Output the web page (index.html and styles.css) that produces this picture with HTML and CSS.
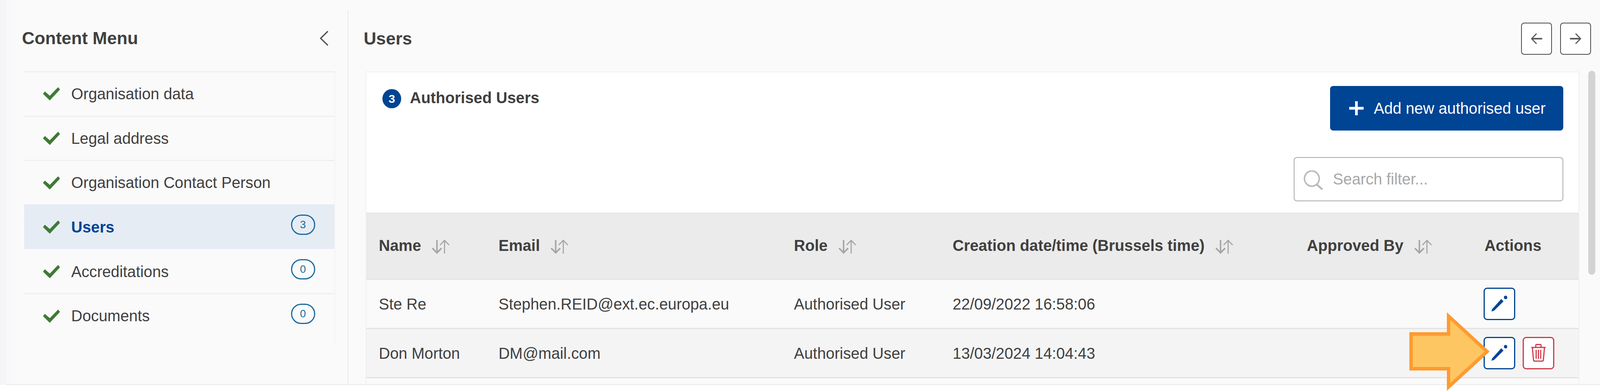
FILE: index.html
```html
<!DOCTYPE html>
<html lang="en">
<head>
<meta charset="utf-8">
<title>Users</title>
<link rel="stylesheet" href="styles.css">
</head>
<body>
<svg class="defs" width="0" height="0" aria-hidden="true">
  <symbol id="check" viewBox="0 0 46 34" preserveAspectRatio="none"><polygon points="0,17 5,11 18,22 40,0 45,6 18,34" fill="currentColor"/></symbol>
  <symbol id="sort" viewBox="0 0 46 37" preserveAspectRatio="none"><path d="M13 1V34M1 22L13 34L25 22" fill="none" stroke="#a6a6a6" stroke-width="4"/><path d="M33 36V2M21 14L33 2L45 14" fill="none" stroke="#a6a6a6" stroke-width="3"/></symbol>
  <symbol id="pencil" viewBox="0 0 44 42" preserveAspectRatio="none"><polygon points="1,41 3,35 27,9 33,15 8,39" fill="currentColor"/><circle cx="38.500" cy="5" r="4.500" fill="currentColor"/></symbol>
  <symbol id="trash" viewBox="0 0 40 46" preserveAspectRatio="none"><path d="M1 9H39M13 8V4Q13 1.500 15.500 1.500H24.500Q27 1.500 27 4V8M4 9L7 41Q7.300 44 10 44H30Q32.700 44 33 41L36 9M14 15V38M20 15V38M26 15V38" fill="none" stroke="currentColor" stroke-width="3"/></symbol>
</svg>
<div class="app">
  <div class="shell">
    <aside class="sidebar">
      <div class="side-head">
        <h2 class="page-title">Content Menu</h2>
        <svg class="chevron" viewBox="0 0 24 40" preserveAspectRatio="none"><path d="M22 2L3 20L22 38" fill="none" stroke="#555" stroke-width="3.500"/></svg>
      </div>
      <ul class="menu">
        <li class="menu-item"><svg class="check"><use href="#check"/></svg><span class="menu-label">Organisation data</span></li>
        <li class="menu-item"><svg class="check"><use href="#check"/></svg><span class="menu-label">Legal address</span></li>
        <li class="menu-item"><svg class="check"><use href="#check"/></svg><span class="menu-label">Organisation Contact Person</span></li>
        <li class="menu-item active"><svg class="check"><use href="#check"/></svg><span class="menu-label">Users</span><span class="badge">3</span></li>
        <li class="menu-item after-active"><svg class="check"><use href="#check"/></svg><span class="menu-label">Accreditations</span><span class="badge">0</span></li>
        <li class="menu-item"><svg class="check"><use href="#check"/></svg><span class="menu-label">Documents</span><span class="badge">0</span></li>
      </ul>
    </aside>
    <main class="main">
      <header class="main-head">
        <h2 class="page-title">Users</h2>
        <div class="nav-buttons">
          <button class="nav-btn" type="button"><svg viewBox="0 0 30 28" preserveAspectRatio="none"><path d="M30 14H3" fill="none" stroke="#5a5a5a" stroke-width="4"/><path d="M15 1L2 14L15 27" fill="none" stroke="#5a5a5a" stroke-width="3"/></svg></button>
          <button class="nav-btn" type="button"><svg viewBox="0 0 30 28" preserveAspectRatio="none"><path d="M0 14H27" fill="none" stroke="#5a5a5a" stroke-width="4"/><path d="M15 1L28 14L15 27" fill="none" stroke="#5a5a5a" stroke-width="3"/></svg></button>
        </div>
      </header>
      <div class="content">
        <section class="card">
          <div class="card-top">
            <div class="card-title"><span class="count">3</span><h3 class="card-heading">Authorised Users</h3></div>
            <div class="card-tools">
              <button class="add-btn" type="button"><svg class="plus" viewBox="0 0 38 36" preserveAspectRatio="none"><path d="M19 0V36M0 18H38" fill="none" stroke="#fff" stroke-width="7"/></svg>Add new authorised user</button>
              <div class="search">
                <svg class="search-icon" viewBox="0 0 52 50" preserveAspectRatio="none"><circle cx="22" cy="21" r="19.500" fill="none" stroke="#bbb" stroke-width="4"/><path d="M35 36L50 49" fill="none" stroke="#bbb" stroke-width="5"/></svg>
                <span class="search-text">Search filter...</span>
              </div>
            </div>
          </div>
          <table class="users">
            <colgroup><col class="c1"><col class="c2"><col class="c3"><col class="c4"><col class="c5"><col class="c6"></colgroup>
            <thead>
              <tr>
                <th>Name<svg class="sort"><use href="#sort"/></svg></th>
                <th>Email<svg class="sort"><use href="#sort"/></svg></th>
                <th>Role<svg class="sort"><use href="#sort"/></svg></th>
                <th>Creation date/time (Brussels time)<svg class="sort"><use href="#sort"/></svg></th>
                <th>Approved By<svg class="sort"><use href="#sort"/></svg></th>
                <th>Actions</th>
              </tr>
            </thead>
            <tbody>
              <tr>
                <td>Ste Re</td><td>Stephen.REID@ext.ec.europa.eu</td><td>Authorised User</td><td>22/09/2022 16:58:06</td><td></td>
                <td class="actions"><button class="icon-btn edit" type="button"><svg class="pencil"><use href="#pencil"/></svg></button></td>
              </tr>
              <tr class="alt">
                <td>Don Morton</td><td>DM@mail.com</td><td>Authorised User</td><td>13/03/2024 14:04:43</td><td></td>
                <td class="actions"><button class="icon-btn edit" type="button"><svg class="pencil"><use href="#pencil"/></svg></button><button class="icon-btn del" type="button"><svg class="trash"><use href="#trash"/></svg></button></td>
              </tr>
              <tr><td>&nbsp;</td><td></td><td></td><td></td><td></td><td></td></tr>
            </tbody>
          </table>
        </section>
        <div class="scroll-thumb"></div>
      </div>
    </main>
  </div>
</div>
<svg class="callout" viewBox="0 0 212 205" preserveAspectRatio="none"><polygon points="4.500,57.500 103.500,57.500 103.500,12 205,102.500 103.500,193 103.500,146.500 4.500,146.500" fill="#fdc663" stroke="#fd9b30" stroke-width="9" stroke-miterlimit="10"/></svg>
</body>
</html>
```
FILE: styles.css
```css
:root { --u: calc(100vw / 4224); }
* { box-sizing: border-box; }
html, body { margin: 0; padding: 0; }
body {
  position: relative;
  width: 100%;
  height: 1003px;
  overflow: hidden;
  background: #fff;
  color: #404040;
  font-family: "Liberation Sans", Arial, sans-serif;
  font-size: calc(var(--u) * 41);
}
.defs { position: absolute; }
.app { height: 985px; padding-left: calc(var(--u) * 16); background: #f5f5f5; }
.shell {
  display: flex;
  height: 100%;
  border-bottom: 2px solid #e8e8ea;
  background: linear-gradient(to right, #f7f8fa, #fafafa 32px);
}
.sidebar {
  width: calc(var(--u) * 904);
  margin-top: 27px;
  padding: 0 calc(var(--u) * 33) 0 calc(var(--u) * 48);
  border-right: 2px solid #e8e8e8;
  flex: none;
}
.side-head {
  display: flex;
  align-items: center;
  justify-content: space-between;
  height: 155px;
  padding: 0 calc(var(--u) * 17) 13px 0;
  margin-left: calc(var(--u) * -6);
}
.page-title { margin: 0; font-size: calc(var(--u) * 46); font-weight: 700; color: #404040; }
.chevron { width: calc(var(--u) * 24); height: 40px; }
.menu {
  list-style: none;
  margin: 0;
  padding: 0;
  height: 700px;
  border-right: 2px solid #f3f3f3;
}
.menu-item {
  display: flex;
  align-items: center;
  height: 113.7px;
  padding: 0 calc(var(--u) * 51) 0 calc(var(--u) * 49);
  border-top: 3px solid #efefef;
}
.check { width: calc(var(--u) * 46); height: 34px; margin-right: calc(var(--u) * 29); color: #3f7a35; flex: none; }
.menu-label { flex: 1; }
.menu-item.active { background: #e6ecf4; border-top-color: #e6ecf4; }
.menu-item.active .menu-label { color: #004494; font-weight: 700; }
.menu-item.after-active { border-top-color: transparent; }
.badge {
  display: flex;
  align-items: center;
  justify-content: center;
  width: calc(var(--u) * 64);
  height: 52px;
  margin-bottom: 12px;
  border: 3px solid #1b6b9f;
  border-radius: 26px;
  color: #1b6b9f;
  font-size: calc(var(--u) * 28);
}
.main { flex: 1; min-width: 0; display: flex; flex-direction: column; overflow: hidden; padding-left: calc(var(--u) * 40); }
.main-head {
  display: flex;
  align-items: center;
  justify-content: space-between;
  height: 181px;
  padding: 16px calc(var(--u) * 24) 0 0;
  flex: none;
}
.nav-buttons { display: flex; gap: calc(var(--u) * 22); }
.nav-btn {
  display: flex;
  align-items: center;
  justify-content: center;
  width: calc(var(--u) * 81);
  height: 82px;
  padding: 0;
  border: 2.5px solid #4a4a4a;
  border-radius: 8px;
  background: #fff;
}
.nav-btn svg { width: calc(var(--u) * 30); height: 28px; }
.content { flex: 1; min-height: 0; display: flex; padding-left: calc(var(--u) * 5); }
.card {
  width: calc(var(--u) * 3204);
  height: 900px;
  margin-top: 2px;
  background: #fff;
  border: 2px solid #efefef;
  flex: none;
}
.card-top {
  display: flex;
  justify-content: space-between;
  height: 362px;
  padding: 35px calc(var(--u) * 40) 0 calc(var(--u) * 43);
  border-bottom: 3px solid #e6e6e6;
}
.card-title { display: flex; align-items: flex-start; gap: calc(var(--u) * 23); margin-top: 8px; }
.count {
  display: flex;
  align-items: center;
  justify-content: center;
  width: calc(var(--u) * 49);
  height: 49px;
  border-radius: 50%;
  background: #004494;
  color: #fff;
  font-weight: 700;
  font-size: calc(var(--u) * 31);
}
.card-heading { margin: 0; font-size: calc(var(--u) * 41); font-weight: 700; color: #404040; }
.card-tools { display: flex; flex-direction: column; align-items: flex-end; gap: 68px; }
.add-btn {
  display: flex;
  align-items: center;
  width: calc(var(--u) * 616);
  height: 114px;
  padding: 0 0 0 calc(var(--u) * 51);
  border: 0;
  border-radius: 8px;
  background: #004494;
  color: #fff;
  font-family: "Liberation Sans", Arial, sans-serif;
  font-size: calc(var(--u) * 41);
}
.plus { width: calc(var(--u) * 38); height: 36px; margin-right: calc(var(--u) * 27); flex: none; }
.search {
  display: flex;
  align-items: center;
  width: calc(var(--u) * 711);
  height: 113px;
  padding-left: calc(var(--u) * 23);
  border: 2.5px solid #aaa;
  border-radius: 8px;
}
.search-icon { width: calc(var(--u) * 52); height: 50px; margin: 4px calc(var(--u) * 26) 0 0; flex: none; }
.search-text { color: #a8a8a8; }
.users { width: calc(var(--u) * 3200); border-collapse: collapse; table-layout: fixed; }
.c1 { width: calc(var(--u) * 349); }
.c2 { width: calc(var(--u) * 780); }
.c3 { width: calc(var(--u) * 419); }
.c4 { width: calc(var(--u) * 935); }
.c5 { width: calc(var(--u) * 469); }
.c6 { width: calc(var(--u) * 248); }
.users th, .users td { padding: 0; text-align: left; border-bottom: 3px solid #e3e3e3; white-space: nowrap; }
.users th:first-child, .users td:first-child { padding-left: calc(var(--u) * 33); }
.users th { height: 167px; background: #ebebeb; font-weight: 700; color: #404040; padding-bottom: 3px; }
.users td { height: 126px; background: #fafafa; padding-top: 3px; }
.users tr.alt td { background: #f4f4f4; }
.sort { width: calc(var(--u) * 46); height: 37px; margin-left: calc(var(--u) * 29); vertical-align: -8px; }
.users td.actions { padding: 0; font-size: 0; }
.icon-btn {
  display: inline-flex;
  align-items: center;
  justify-content: center;
  width: calc(var(--u) * 83);
  height: 83px;
  padding: 0;
  background: #fff;
  border: 3px solid #004494;
  border-radius: 9px;
  vertical-align: middle;
}
.icon-btn.edit { color: #004494; margin-left: calc(var(--u) * -2); }
.icon-btn.del { color: #cf3a48; border-color: #cf3a48; margin-left: calc(var(--u) * 20); }
.pencil { width: calc(var(--u) * 44); height: 42px; }
.trash { width: calc(var(--u) * 40); height: 46px; }
.scroll-thumb {
  width: calc(var(--u) * 19);
  height: 522px;
  margin-left: calc(var(--u) * 24);
  border-radius: 10px;
  background: #d3d3d3;
  flex: none;
}
.callout { position: absolute; left: calc(var(--u) * 3721); top: 797px; width: calc(var(--u) * 212); height: 205px; }
```
